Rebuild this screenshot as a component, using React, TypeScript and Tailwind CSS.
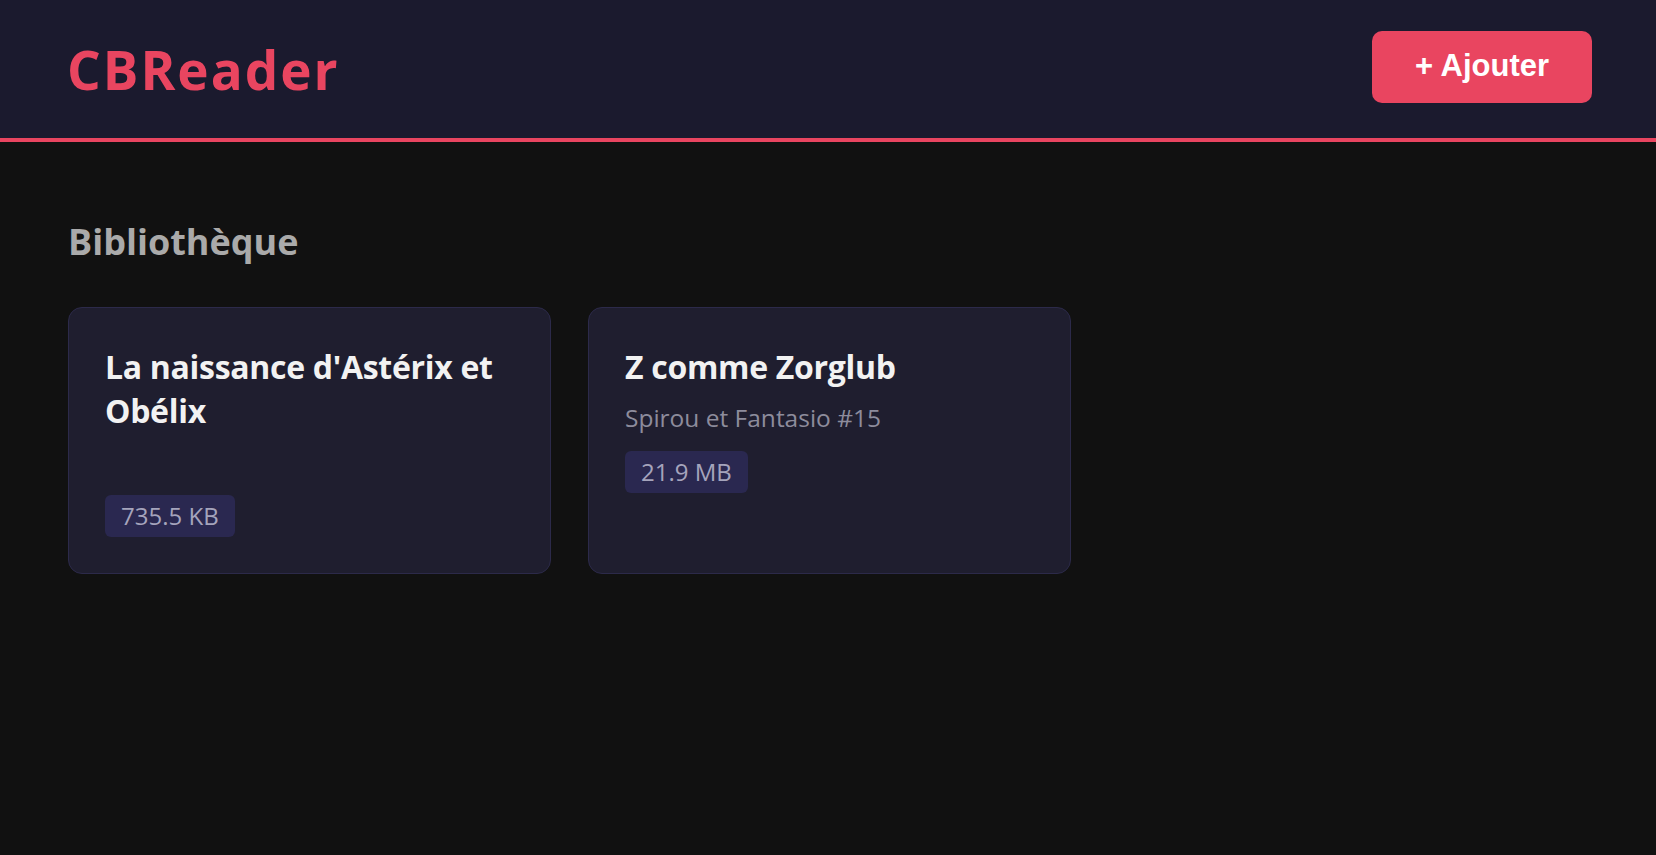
import { useState } from "react";

interface Comic {
  id: number;
  title: string;
  series: string | null;
  size: string;
}

const COMICS: Comic[] = [
  { id: 1, title: "La naissance d'Astérix et Obélix", series: null, size: "735.5 KB" },
  { id: 2, title: "Z comme Zorglub", series: "Spirou et Fantasio #15", size: "21.9 MB" },
];

export default function App() {
  const [comics] = useState<Comic[]>(COMICS);

  return (
    <div className="min-h-[855px] bg-[#111111] font-['Open_Sans',sans-serif]">
      {/* Header */}
      <header className="flex h-[142px] items-center justify-between border-b-[4px] border-[#e94560] bg-[#1b1a2e] pr-16 pl-[67px] pt-[1px]">
        <h1 className="text-[53px] font-bold leading-none tracking-[2px] text-[#e94560]">
          CBReader
        </h1>
        <button className="mb-[6px] h-[72px] w-[220px] rounded-[10px] bg-[#e94560] font-['Liberation_Sans',sans-serif] text-[31px] font-bold text-white">
          + Ajouter
        </button>
      </header>

      {/* Library */}
      <main className="pl-[68px] pr-16 pt-[73px]">
        <h2 className="text-[36px] font-bold text-[#aaaaaa]">Bibliothèque</h2>

        <div className="mt-[38px] flex gap-[37px]">
          {comics.map((comic) => (
            <div
              key={comic.id}
              className="w-[483px] rounded-[14px] border border-[#2c2a4a] bg-[#1f1e2f] px-9 pt-[37px] pb-[36px]"
            >
              <h3 className="text-[32px] font-bold leading-[44px] tracking-[-0.3px] text-[#f2f2f2]">
                {comic.title}
              </h3>
              <p className="mt-[11px] h-[36px] text-[24.5px] leading-[36px] text-[#8d8c9c]">
                {comic.series}
              </p>
              <span className="mt-[15px] inline-block rounded-[6px] bg-[#2a2850] px-4 py-[3px] text-[24px] text-[#a5a4bc]">
                {comic.size}
              </span>
            </div>
          ))}
        </div>
      </main>
    </div>
  );
}
